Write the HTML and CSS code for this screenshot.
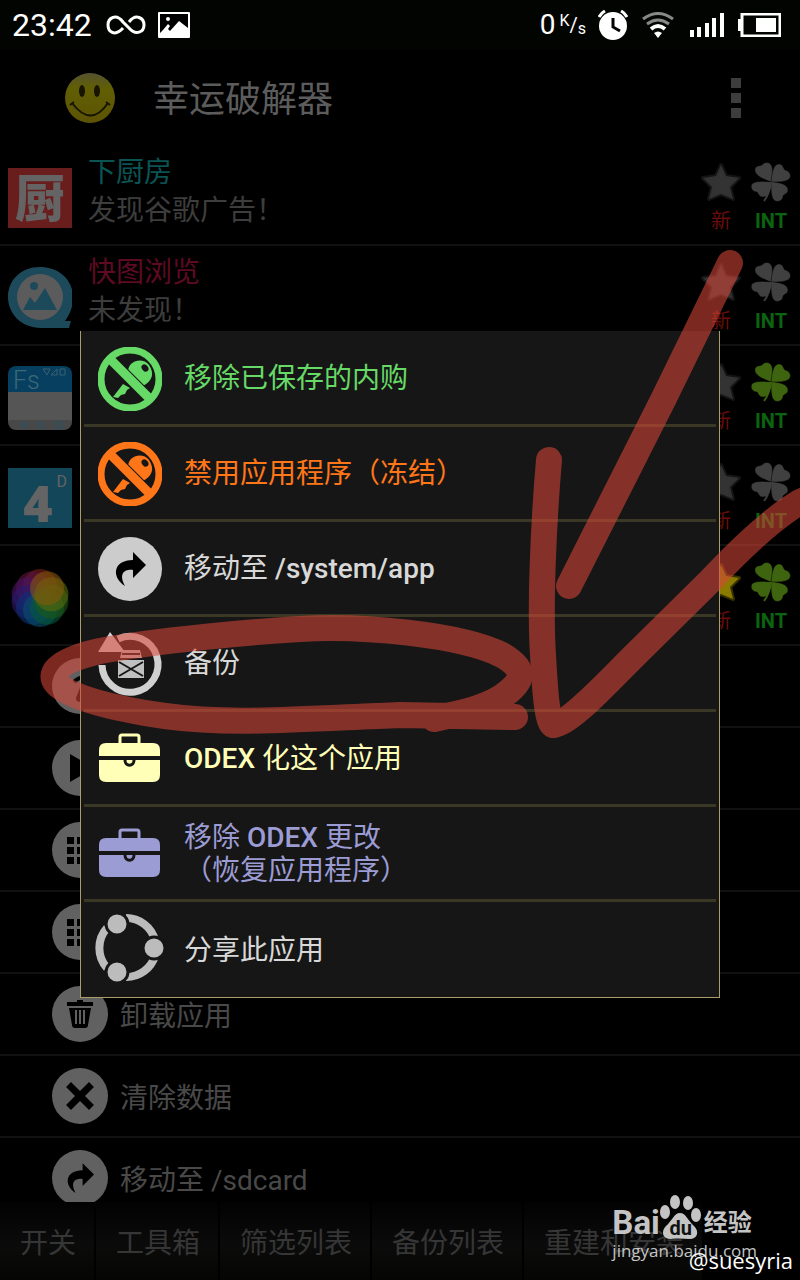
FILE: index.html
```html
<!DOCTYPE html>
<html lang="zh-CN">
<head>
  <meta charset="UTF-8" />
  <meta name="viewport" content="width=device-width, initial-scale=1.0"/>
  <title>幸运破解器</title>
  <link rel="stylesheet" href="styles.css">
</head>
<body>

  <!-- shared icons -->
  <svg class="sprite" aria-hidden="true">
    <symbol id="star" viewBox="0 0 40 40">
      <path d="M20 3l5 11 13 2-9 9 3 12-12-5-12 5 3-12-9-9 13-2z" fill="currentColor" stroke="currentColor" stroke-opacity=".4" stroke-width="4" stroke-linejoin="round"/>
    </symbol>
    <symbol id="clover" viewBox="0 0 40 40">
      <g fill="currentColor" stroke="#000" stroke-opacity=".35">
        <path d="M20 20C12 17 3 13 4 7c1-4 6-3 7-4 3-4 9-3 10 2 1 4 0 10-1 15z"/>
        <path d="M20 20c1-8 2-18 8-18 4 0 4 4 6 6 5 1 7 6 4 9s-11 3-18 3z"/>
        <path d="M20 20c7 0 17 2 17 8 0 4-4 4-5 6 0 5-6 7-9 4s-3-11-3-18z"/>
        <path d="M20 20c0 7-2 15-8 15-4 0-4-3-6-5-5 0-7-5-5-8s12-3 19-2z"/>
      </g>
      <path d="M20 20c-1 8-3 14-7 19" fill="none" stroke="currentColor" stroke-width="2"/>
    </symbol>
    <symbol id="nokey" viewBox="0 0 64 64">
      <path d="M25 37L15 50l5 1 3-3 4-1 2-4 3-2z" fill="currentColor"/>
      <path d="M30 25c0-12 15-15 21-7 6 9 3 16-6 21z" fill="currentColor"/>
      <ellipse cx="47" cy="21" rx="3" ry="4" fill="#161616" transform="rotate(-40 47 21)"/>
      <path d="M12 12l40 40" stroke="#161616" stroke-width="11"/>
      <path d="M12 12l40 40" stroke="currentColor" stroke-width="9"/>
      <circle cx="32" cy="32" r="29" fill="none" stroke="currentColor" stroke-width="7"/>
    </symbol>
    <symbol id="move" viewBox="0 0 64 64">
      <circle cx="32" cy="32" r="32" fill="currentColor"/>
      <path d="M35 15l13 13-13 13v-8c-8-1-15 3-8 16-14-9-12-26 8-26z" fill="#000"/>
    </symbol>
    <symbol id="case" viewBox="0 0 64 64">
      <path d="M22 17v-7q0-2 2-2h15q2 0 2 2v7" fill="none" stroke="currentColor" stroke-width="3"/>
      <path d="M1 29v-6q0-7 7-7h47q7 0 7 7v6zM1 33h61v15q0 7-7 7H8q-7 0-7-7z" fill="currentColor"/>
      <path d="M27 33c0 7 9 7 9 0" fill="none" stroke="#161616" stroke-width="3"/>
    </symbol>
    <symbol id="grid" viewBox="0 0 56 56">
      <circle cx="28" cy="28" r="28" fill="currentColor"/>
      <path d="M15 15h7v7h-7zM25 15h7v7h-7zM35 15h7v7h-7zM15 25h7v7h-7zM25 25h7v7h-7zM35 25h7v7h-7zM15 35h7v7h-7zM25 35h7v7h-7zM35 35h7v7h-7z" fill="#000"/>
    </symbol>
  </svg>

  <div class="app">
    <div class="status">
      <span class="clock">23:42</span>
      <svg width="40" height="24" viewBox="0 0 40 24" fill="none" stroke="#fff" stroke-width="3">
        <path d="M17 15c-8 9-15 4-15-3s8-12 15-3l6 6c7 8 15 4 15-3s-8-12-15-3"/>
      </svg>
      <svg class="photo" width="32" height="26" viewBox="0 0 32 26">
        <path d="M0 1q0-1 1-1h30q1 0 1 1v24q0 1-1 1H1q-1 0-1-1z" fill="#fff"/>
        <path d="M2 2h28v14l-9-7-9 10-2-2 2-3-2-2-5 6-3 3z" fill="#000"/>
        <circle cx="10" cy="7" r="2" fill="#fff"/>
      </svg>
      <span class="speed">0<small><sup>K</sup>/<sub>s</sub></small></span>
      <svg width="30" height="30" viewBox="0 0 30 30">
        <circle cx="15" cy="16" r="14" fill="#fff"/>
        <path d="M1 7q2-4 6-6M29 7q-2-4-6-6" fill="none" stroke="#fff" stroke-width="3"/>
        <path d="M15 8v9l7 4" fill="none" stroke="#000" stroke-width="3"/>
      </svg>
      <svg class="wifi" width="32" height="26" viewBox="0 0 32 26" fill="none" stroke-width="4">
        <path d="M1 7q15-11 30 0M5 12q11-8 22 0" stroke="#888" stroke-width="3"/>
        <path d="M9 17q7-6 14 0" stroke="#fff"/>
        <path d="M12 21q4-3 8 0l-4 5z" fill="#fff"/>
      </svg>
      <svg class="signal" width="34" height="24" viewBox="0 0 34 24">
        <path d="M0 17h4v7H0zM7 14h4v10H7zM15 10h4v14h-4zM22 5h4v19h-4zM30 0h4v24h-4z" fill="#fff"/>
      </svg>
      <svg class="battery" width="43" height="24" viewBox="0 0 43 24">
        <path d="M0 6h3v12H0z" fill="#fff"/>
        <path d="M4 1h38v22H4z" fill="none" stroke="#fff" stroke-width="3"/>
        <path d="M18 5h20v14H18z" fill="#fff"/>
      </svg>
    </div>

    <header class="header">
      <svg width="50" height="52" viewBox="0 0 50 52">
        <defs>
          <linearGradient id="face" x1="0" y1="0" x2="0" y2="1">
            <stop offset="0" stop-color="#555131"/>
            <stop offset=".3" stop-color="#615f04"/>
            <stop offset="1" stop-color="#5c5304"/>
          </linearGradient>
        </defs>
        <circle cx="25" cy="26" r="25" fill="url(#face)"/>
        <ellipse cx="17" cy="19" rx="3" ry="6" fill="#171500"/>
        <ellipse cx="32" cy="19" rx="3" ry="6" fill="#171500"/>
        <path d="M7 31q19 25 36 0M5 33l4-3M41 30l4 3" fill="none" stroke="#171500" stroke-width="2"/>
      </svg>
      <h1>幸运破解器</h1>
      <button class="more" aria-label="更多"><i></i><i></i><i></i></button>
    </header>

    <main class="list">
      <div class="row">
        <div class="logo chef">厨</div>
        <div class="info"><p class="cyan">下厨房</p><p>发现谷歌广告！</p></div>
        <div class="mark new"><svg><use href="#star"/></svg>新</div>
        <div class="mark int"><svg><use href="#clover"/></svg>INT</div>
      </div>
      <div class="row">
        <svg class="logo" viewBox="0 0 64 64">
          <path d="M32 1C13 1 0 14 0 31s14 31 33 31h28l2-7h-6c5-7 8-14 8-24C65 14 51 1 32 1z" fill="#1d4a5b"/>
          <circle cx="32" cy="31" r="23" fill="#5b5b5b"/>
          <circle cx="26" cy="20" r="4" fill="#1d4a5b"/>
          <path d="M15 44l7-13 5 6 10-15 12 22z" fill="#1d4a5b"/>
        </svg>
        <div class="info"><p class="red">快图浏览</p><p>未发现！</p></div>
        <div class="mark new"><svg><use href="#star"/></svg>新</div>
        <div class="mark int"><svg><use href="#clover"/></svg>INT</div>
      </div>
      <div class="row">
        <div class="logo fs">
          <span>Fs</span>
          <svg class="fs-top" width="24" height="8" viewBox="0 0 24 8" fill="none" stroke="#3c6070"><path d="M1 1h7L5 7zM9 7l6-6v6zM18 1h5v6h-5z"/></svg>
          <svg class="fs-nav" width="44" height="8" viewBox="0 0 44 8" fill="none" stroke="#20526b" stroke-width="1"><path d="M7 1v6L1 4zM37 1h6v6h-6z"/><circle cx="22" cy="4" r="3"/></svg>
        </div>
        <div class="info"></div>
        <div class="mark new"><svg><use href="#star"/></svg>新</div>
        <div class="mark int lucky"><svg><use href="#clover"/></svg>INT</div>
      </div>
      <div class="row">
        <div class="logo four">4<sup>D</sup></div>
        <div class="info"></div>
        <div class="mark new"><svg><use href="#star"/></svg>新</div>
        <div class="mark int"><svg><use href="#clover"/></svg>INT</div>
      </div>
      <div class="row">
        <svg class="logo" viewBox="0 0 64 64">
          <g transform="translate(32 32)" fill-opacity=".6">
            <circle cy="-12" r="17" fill="#7a1f1a"/>
            <circle cy="-12" r="17" fill="#5a1440" transform="rotate(-36)"/>
            <circle cy="-12" r="17" fill="#4a1466" transform="rotate(-72)"/>
            <circle cy="-12" r="17" fill="#2a1a6c" transform="rotate(-108)"/>
            <circle cy="-12" r="17" fill="#0e2f74" transform="rotate(-144)"/>
            <circle cy="-12" r="17" fill="#06506c" transform="rotate(180)"/>
            <circle cy="-12" r="17" fill="#07583c" transform="rotate(144)"/>
            <circle cy="-12" r="17" fill="#1d5a18" transform="rotate(108)"/>
            <circle cy="-12" r="17" fill="#5a6a0c" transform="rotate(72)"/>
            <circle cy="-12" r="17" fill="#84560c" transform="rotate(36)"/>
          </g>
        </svg>
        <div class="info"></div>
        <div class="mark new gold"><svg><use href="#star"/></svg>新</div>
        <div class="mark int lucky"><svg><use href="#clover"/></svg>INT</div>
      </div>

      <div class="option">
        <svg viewBox="0 0 56 56"><circle cx="28" cy="28" r="28" fill="currentColor"/><path d="M22 24q6-6 9-3 2 2-5 19 0 4 6-1" fill="none" stroke="#000" stroke-width="4"/></svg>
      </div>
      <div class="option">
        <svg viewBox="0 0 56 56"><circle cx="28" cy="28" r="28" fill="currentColor"/><path d="M18 14l24 14-24 14z" fill="#000"/></svg>
      </div>
      <div class="option"><svg><use href="#grid"/></svg></div>
      <div class="option"><svg><use href="#grid"/></svg></div>
      <div class="option">
        <svg viewBox="0 0 56 56"><circle cx="28" cy="28" r="28" fill="currentColor"/><path d="M15 16h10v-2h6v2h10v4H15zM17 22h22l-3 17q0 3-3 3H23q-3 0-3-3z" fill="#000"/><path d="M24 24v14M28 24v14M32 24v14" stroke="currentColor" stroke-width="2"/></svg>
        卸载应用
      </div>
      <div class="option">
        <svg viewBox="0 0 56 56"><circle cx="28" cy="28" r="28" fill="currentColor"/><path d="M19 19l18 18M37 19L19 37" stroke="#000" stroke-width="7" stroke-linecap="square"/></svg>
        清除数据
      </div>
      <div class="option"><svg><use href="#move"/></svg>移动至 /sdcard</div>
    </main>

    <nav class="tabs">
      <button>开关</button>
      <button>工具箱</button>
      <button>筛选列表</button>
      <button>备份列表</button>
      <button>重建和安装</button>
    </nav>

    <div class="dialog" role="dialog" aria-label="应用操作">
      <button class="green"><svg><use href="#nokey"/></svg>移除已保存的内购</button>
      <button class="orange"><svg><use href="#nokey"/></svg>禁用应用程序（冻结）</button>
      <button><svg class="grey"><use href="#move"/></svg><span>移动至 <b>/system/app</b></span></button>
      <button>
        <svg viewBox="0 0 64 64">
          <path d="M20 7A28 28 0 1 1 4 33" fill="none" stroke="#d0d0d0" stroke-width="7"/>
          <path d="M0 20L12 0l15 20z" fill="#d0d0d0"/>
          <path d="M20 28h26v18H20zM22 26l2-8h18l2 8z" fill="#c0c0c0"/>
          <path d="M21 30l24 14M45 30L21 44" stroke="#161616" stroke-width="2"/>
          <path d="M24 22h18" stroke="#161616" stroke-width="2"/>
        </svg>
        备份
      </button>
      <button class="cream"><svg><use href="#case"/></svg><span><b>ODEX</b> 化这个应用</span></button>
      <button class="violet"><svg><use href="#case"/></svg><span>移除 <b>ODEX</b> 更改<br>（恢复应用程序）</span></button>
      <button>
        <svg viewBox="0 0 64 64" fill="#bcbcbc">
          <path d="M28 0a30 30 0 0 1 29 22M57 38a30 30 0 0 1-29 21M9 50a30 30 0 0 1 0-40" fill="none" stroke="#bcbcbc" stroke-width="8"/>
          <g stroke="#161616" stroke-width="3"><circle cx="19" cy="6" r="11"/><circle cx="56" cy="30" r="11"/><circle cx="19" cy="54" r="11"/></g>
        </svg>
        分享此应用
      </button>
    </div>

    <!-- marker strokes -->
    <svg class="marker" viewBox="0 0 800 1280" aria-hidden="true">
      <g opacity=".57">
        <path d="M730 263L663 400L569 586"/>
        <path d="M549 460C543 530 540 610 543 655C545 690 547 725 554 725C570 723 605 685 633 657L711 580C740 549 770 520 800 502L830 488"/>
        <path d="M515 717L400 715C300 719 230 725 165 716C110 708 70 697 57 684C45 671 65 659 100 651C160 640 250 632 300 629C360 625 460 634 502 655C528 670 524 682 500 698C480 710 455 714 434 719"/>
      </g>
    </svg>

    <div class="watermark">
      <div class="brand">
        <b>Bai</b>
        <span class="paw">
          <svg width="42" height="44" viewBox="0 0 42 44" fill="#c4c4c4">
            <ellipse cx="5" cy="17" rx="5" ry="7"/><ellipse cx="15" cy="7" rx="5" ry="7"/><ellipse cx="28" cy="8" rx="5" ry="7"/><ellipse cx="36" cy="20" rx="5" ry="7"/>
            <path d="M20 18c6 0 8 8 14 13 6 6 3 13-4 13-6 0-12-1-19 0-9 0-10-8-5-13 6-5 8-13 14-13z"/>
          </svg>
          <em>du</em>
        </span>
        <b class="cn">经验</b>
      </div>
      <div class="site">jingyan.baidu.com</div>
    </div>
    <div class="author">@suesyria</div>
  </div>

</body>
</html>
```
FILE: styles.css
```css
* {
  box-sizing: border-box;
}
body {
  margin: 0;
  background: #000;
  color: #d8d8d8;
  font-family: Roboto, 'Noto Sans CJK SC', sans-serif;
  font-size: 28px;
}
button {
  border: none;
  background: none;
  padding: 0;
  color: inherit;
  font: inherit;
  text-align: left;
}
p, h1 {
  margin: 0;
  font-weight: 400;
}
.sprite {
  position: absolute;
  width: 0;
  height: 0;
}
.app {
  position: relative;
  height: 100vh;
  display: flex;
  flex-direction: column;
  overflow: hidden;
}

/* status bar */
.status {
  flex: none;
  height: 50px;
  padding: 0 19px 0 12px;
  display: flex;
  align-items: center;
  background: #020402;
  color: #fff;
}
.clock {
  font-size: 32px;
  margin-right: 14px;
}
.photo {
  margin-left: 12px;
}
.speed {
  margin: 0 12px 0 auto;
  display: flex;
  gap: 4px;
  line-height: 30px;
}
.speed small {
  font-size: 20px;
  display: flex;
}
.speed sup, .speed sub {
  font-size: 16px;
  line-height: 22px;
}
.speed sub {
  align-self: flex-end;
}
.wifi {
  margin: 0 16px 0 14px;
}
.battery {
  margin-left: 14px;
}

/* title bar */
.header {
  flex: none;
  height: 96px;
  padding: 0 59px 0 65px;
  display: flex;
  align-items: center;
}
.header h1 {
  flex: 1;
  margin: 0 0 4px 38px;
  font-size: 36px;
  color: #5c5c5c;
}
.more {
  display: grid;
  gap: 5px;
}
.more i {
  width: 10px;
  height: 10px;
  background: #3d3d3d;
}

/* application list */
.list {
  flex: 1;
  min-height: 0;
  overflow: hidden;
}
.row {
  height: 100px;
  padding: 0 4px 0 8px;
  border-bottom: 2px solid #111;
  display: flex;
}
.logo {
  flex: none;
  width: 64px;
  height: 64px;
  margin-top: 20px;
}
.info {
  flex: 1;
  margin: 8px 0 0 16px;
  line-height: 38px;
  color: #3d3d3d;
}
.cyan {
  color: #0b5454;
}
.red {
  color: #5e0a22;
}
.mark {
  width: 50px;
  padding-top: 16px;
  text-align: center;
  font-size: 20px;
  line-height: 38px;
}
.mark svg {
  display: block;
  width: 40px;
  height: 40px;
  margin: 0 auto;
  color: #333;
}
.new {
  color: #6b0d08;
}
.new.gold svg {
  color: #8a7a00;
}
.int {
  color: #0a6410;
  font-weight: 700;
}
.int svg {
  color: #404040;
}
.lucky svg {
  color: #3f6410;
}
.chef, .four {
  height: 60px;
  margin-top: 22px;
  text-align: center;
  color: #646464;
}
.chef {
  background: #6a1d1d;
  font-size: 50px;
  font-weight: 900;
  line-height: 64px;
}
.four {
  background: #134659;
  font: 800 50px/70px 'Open Sans', sans-serif;
  display: flex;
  justify-content: flex-end;
}
.four sup {
  margin: 0 5px 0 4px;
  font: 16px/28px Roboto, sans-serif;
}
.fs {
  position: relative;
  border-radius: 8px;
  padding: 2px 5px;
  background: linear-gradient(#063f5f 26px, #555 26px 54px, #484848 54px);
  color: #3c6878;
  font-size: 25px;
  font-weight: 300;
  line-height: 26px;
}
.fs-top {
  position: absolute;
  top: 2px;
  right: 6px;
}
.fs-nav {
  position: absolute;
  left: 11px;
  bottom: 1px;
}

/* actions below the list */
.option {
  height: 82px;
  padding-left: 52px;
  border-bottom: 2px solid #111;
  display: flex;
  align-items: center;
  gap: 12px;
  color: #494949;
}
.option svg {
  width: 56px;
  height: 56px;
  color: #616161;
}

/* bottom tabs */
.tabs {
  flex: none;
  height: 78px;
  display: flex;
  background: #000;
  color: #363636;
}
.tabs button {
  padding: 0 18px 0 20px;
  border-right: 2px solid #000;
  white-space: nowrap;
  background: linear-gradient(#020202, #0b0b0b 55%, #050602);
}

/* popup menu */
.dialog {
  position: absolute;
  top: 331px;
  left: 10%;
  right: 10%;
  padding: 1px 3px 0;
  background: #161616;
  border: 1px solid #a89c68;
  border-top: none;
}
.dialog button {
  width: 100%;
  height: 95px;
  padding: 1px 14px 0;
  border-bottom: 3px solid #3a3724;
  display: flex;
  align-items: center;
  gap: 22px;
  line-height: 33px;
}
.dialog button:last-child {
  border-bottom: none;
}
.dialog b {
  font-weight: 500;
}
.dialog svg {
  flex: none;
  width: 64px;
  height: 64px;
  overflow: visible;
}
.dialog .grey {
  color: #ccc;
}
.dialog .green {
  color: #66d966;
}
.dialog .orange {
  color: #ff7619;
}
.dialog .cream {
  color: #ffffb8;
}
.dialog .violet {
  color: #9c9cd4;
}

.marker {
  position: absolute;
  inset: 0;
  width: 100%;
  height: 100%;
  fill: none;
  stroke: #d94739;
  stroke-width: 26px;
  stroke-linecap: round;
  stroke-linejoin: round;
  pointer-events: none;
}

/* watermark */
.watermark {
  position: absolute;
  right: 43px;
  bottom: 17px;
  color: #c4c4c4;
}
.brand {
  display: flex;
  align-items: flex-end;
  height: 44px;
  font-size: 33px;
  line-height: 32px;
}
.brand .cn {
  margin-left: 2px;
  font-size: 24px;
}
.paw {
  position: relative;
  height: 44px;
}
.paw svg {
  display: block;
}
.paw em {
  position: absolute;
  left: 0;
  right: 0;
  bottom: 0;
  text-align: center;
  color: #111;
  font: 700 20px/22px Roboto, sans-serif;
}
.site {
  font: 17px/24px 'Open Sans', sans-serif;
}
.author {
  position: absolute;
  right: 7px;
  bottom: 5px;
  color: #fff;
  font: 22px/30px 'Open Sans', sans-serif;
}
```
